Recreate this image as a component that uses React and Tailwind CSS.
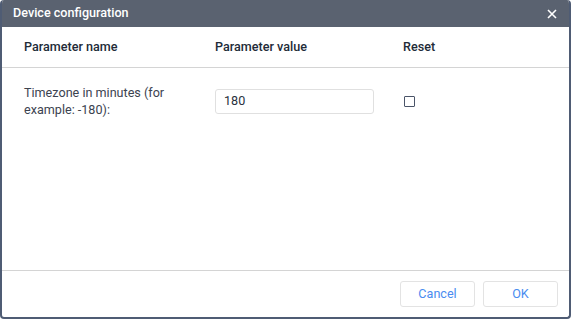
import React from 'react';

const App = () => {
  return (
    <div className="w-[571px] h-[319px] bg-white" style={{ fontFamily: 'Roboto, "Liberation Sans", sans-serif' }}>
      <div className="flex flex-col w-full h-full border-2 border-t-0 border-[#4f5c74] rounded-[4px] overflow-hidden">
        {/* Title bar */}
        <div className="flex items-center justify-between h-[27px] bg-[#5a6270] pl-[11px] pr-[12px] shrink-0">
          <span className="text-white text-[12.6px] font-medium">Device configuration</span>
          <svg width="10" height="10" viewBox="0 0 10 10" className="text-white">
            <path d="M1 1L9 9M9 1L1 9" stroke="currentColor" strokeWidth="1.6" />
          </svg>
        </div>

        {/* Column headers */}
        <div className="grid grid-cols-[191px_188px_1fr] h-[41px] items-center border-b border-[#d4d4d4] pl-[22px] text-[12.6px] font-medium text-[#222b38] shrink-0">
          <span>Parameter name</span>
          <span>Parameter value</span>
          <span>Reset</span>
        </div>

        {/* Rows */}
        <div className="flex-1">
          <div className="grid grid-cols-[191px_188px_1fr] items-center pl-[22px] pt-[16px] text-[12.6px] text-[#3c4350]">
            <span className="leading-[17px]">Timezone in minutes (for<br />example: -180):</span>
            <div className="w-[159px] h-[25px] border border-[#e0e0e0] rounded-[3px] flex items-center px-[8px] text-[#2a3240]">
              180
            </div>
            <div className="pl-[1px]">
              <div className="w-[11px] h-[11px] border border-[#4a5468] rounded-[1px]" />
            </div>
          </div>
        </div>

        {/* Footer */}
        <div className="h-[47px] border-t border-[#d4d4d4] flex items-center justify-end gap-[8px] pr-[11px] shrink-0">
          <button className="w-[75px] h-[26px] border border-[#e3e3e3] rounded-[3px] text-[12.6px] text-[#4a8cf0] bg-white">Cancel</button>
          <button className="w-[75px] h-[26px] border border-[#e3e3e3] rounded-[3px] text-[12.6px] text-[#4a8cf0] bg-white">OK</button>
        </div>
      </div>
    </div>
  );
};

export default App;
